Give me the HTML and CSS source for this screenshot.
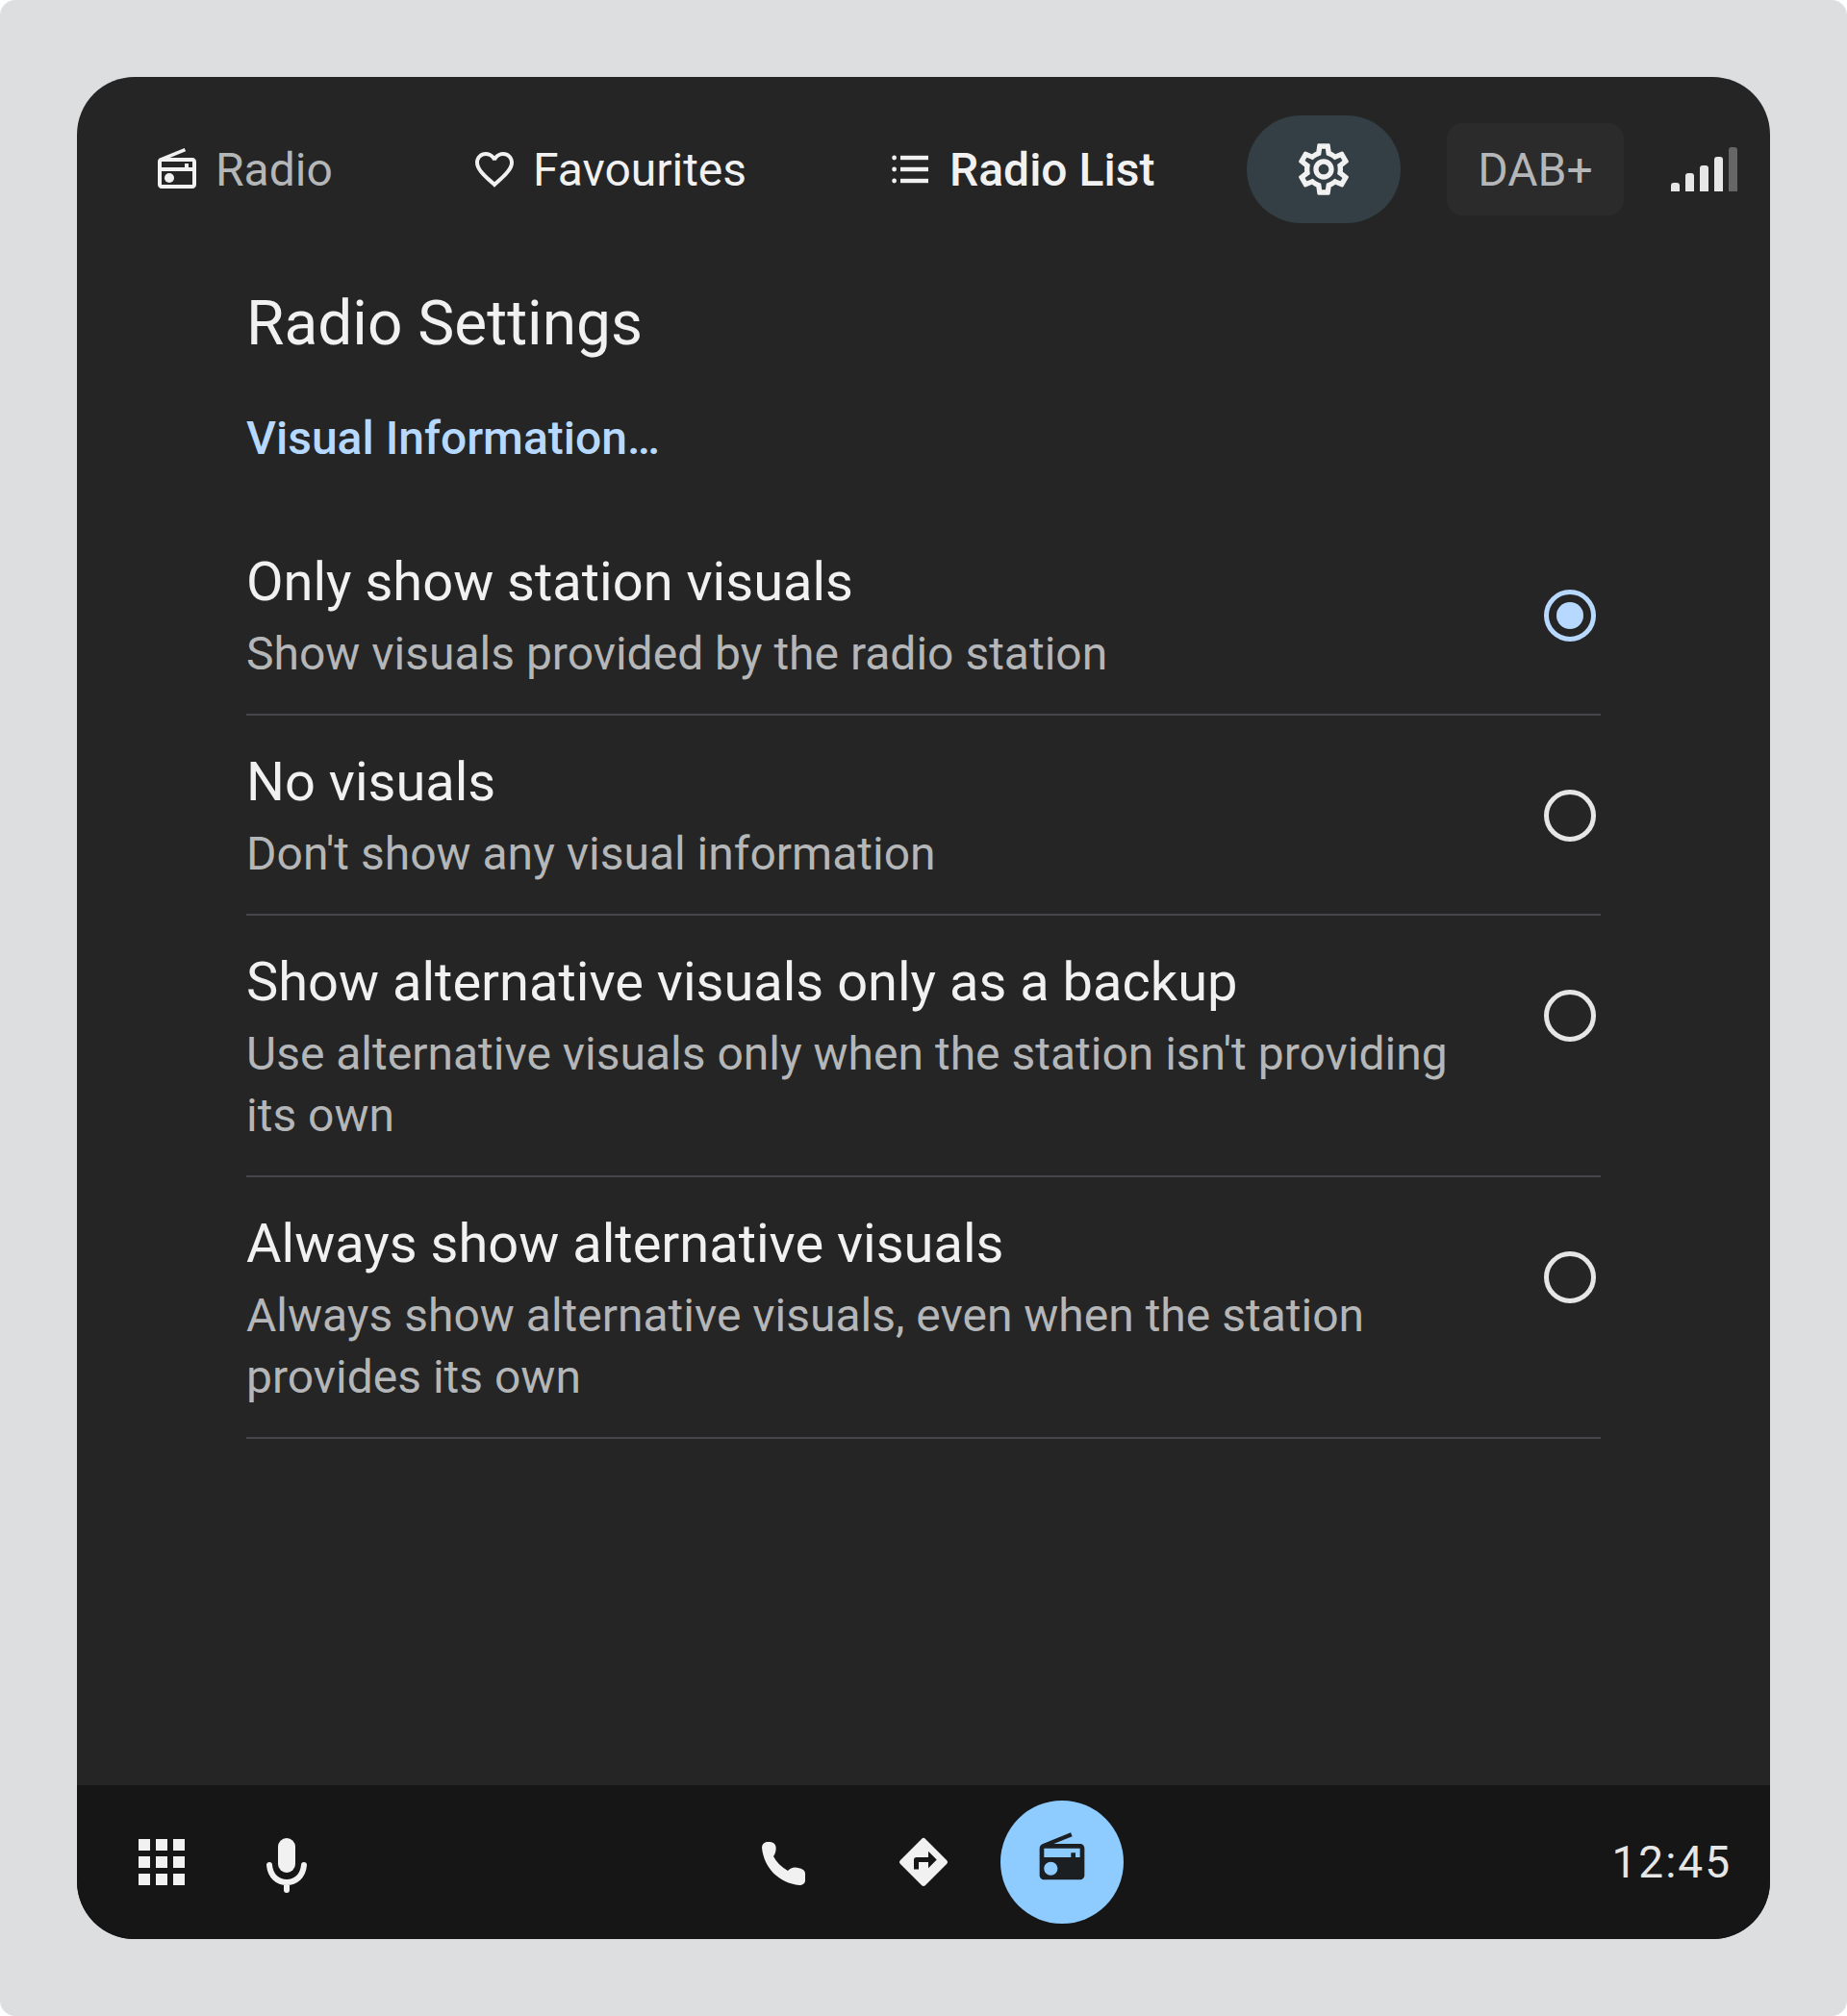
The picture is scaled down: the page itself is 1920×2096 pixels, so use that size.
FILE: index.html
```html
<!DOCTYPE html>
<html lang="en">
<head>
    <meta charset="UTF-8">
    <title>Radio Settings</title>
    <link rel="stylesheet" href="styles.css">
</head>
<body>
    <div class="backdrop">
        <div class="screen">
            <header class="topbar">
                <div class="tab tab-radio">
                    <svg class="icon-48" viewBox="0 0 24 24"><path d="M20 6H8.3l8.26-3.34L15.88 1 3.24 6.15C2.51 6.43 2 7.17 2 8v12c0 1.1.89 2 2 2h16c1.11 0 2-.9 2-2V8c0-1.11-.89-2-2-2zm0 2v3h-2V9h-2v2H4V8h16zM4 20v-7h16v7H4z"/><circle cx="8" cy="16.5" r="2.5"/></svg>
                    <span class="dim">Radio</span>
                </div>
                <div class="tab tab-fav">
                    <svg class="icon-48" viewBox="0 0 24 24"><path d="M16.5 3c-1.74 0-3.41.81-4.5 2.09C10.91 3.81 9.24 3 7.5 3 4.42 3 2 5.42 2 8.5c0 3.78 3.4 6.86 8.55 11.54L12 21.35l1.45-1.32C18.6 15.36 22 12.28 22 8.5 22 5.42 19.58 3 16.5 3zm-4.4 15.55l-.1.1-.1-.1C7.14 14.24 4 11.39 4 8.5 4 6.5 5.5 5 7.5 5c1.54 0 3.04.99 3.57 2.36h1.87C13.46 5.99 14.96 5 16.5 5c2 0 3.5 1.5 3.5 3.5 0 2.89-3.14 5.74-7.9 10.05z"/></svg>
                    <span>Favourites</span>
                </div>
                <div class="tab tab-list">
                    <svg class="icon-48" viewBox="0 0 24 24"><circle cx="3.3" cy="6" r="1.2"/><circle cx="3.3" cy="12" r="1.2"/><circle cx="3.3" cy="18" r="1.2"/><rect x="6.5" y="4.9" width="14.5" height="2.2"/><rect x="6.5" y="10.9" width="14.5" height="2.2"/><rect x="6.5" y="16.9" width="14.5" height="2.2"/></svg>
                    <span class="strong">Radio List</span>
                </div>
                <div class="gear-pill">
                    <svg class="icon-64" viewBox="0 0 24 24"><path d="M19.43 12.98c.04-.32.07-.64.07-.98 0-.34-.03-.66-.07-.98l2.11-1.65c.19-.15.24-.42.12-.64l-2-3.46c-.09-.16-.26-.25-.44-.25-.06 0-.12.01-.17.03l-2.49 1c-.52-.4-1.08-.73-1.69-.98l-.38-2.65C14.46 2.18 14.25 2 14 2h-4c-.25 0-.46.18-.49.42l-.38 2.65c-.61.25-1.17.59-1.69.98l-2.49-1c-.06-.02-.12-.03-.18-.03-.17 0-.34.09-.43.25l-2 3.46c-.13.22-.07.49.12.64l2.11 1.65c-.04.32-.07.65-.07.98 0 .33.03.66.07.98l-2.11 1.65c-.19.15-.24.42-.12.64l2 3.46c.09.16.26.25.44.25.06 0 .12-.01.17-.03l2.49-1c.52.4 1.08.73 1.69.98l.38 2.65c.03.24.24.42.49.42h4c.25 0 .46-.18.49-.42l.38-2.65c.61-.25 1.17-.59 1.69-.98l2.49 1c.06.02.12.03.18.03.17 0 .34-.09.43-.25l2-3.46c.12-.22.07-.49-.12-.64l-2.11-1.65zm-1.98-1.71c.04.31.05.52.05.73 0 .21-.02.43-.05.73l-.14 1.13.89.7 1.08.84-.7 1.21-1.27-.51-1.04-.42-.9.68c-.43.32-.84.56-1.25.73l-1.06.43-.16 1.13-.2 1.35h-1.4l-.19-1.35-.16-1.13-1.06-.43c-.43-.18-.83-.41-1.23-.71l-.91-.7-1.06.43-1.27.51-.7-1.21 1.08-.84.89-.7-.14-1.13c-.03-.31-.05-.54-.05-.74s.02-.43.05-.73l.14-1.13-.89-.7-1.08-.84.7-1.21 1.27.51 1.04.42.9-.68c.43-.32.84-.56 1.25-.73l1.06-.43.16-1.13.2-1.35h1.39l.19 1.35.16 1.13 1.06.43c.43.18.83.41 1.23.71l.91.7 1.06-.43 1.27-.51.7 1.21-1.07.85-.89.7.14 1.13zM12 8c-2.21 0-4 1.79-4 4s1.79 4 4 4 4-1.79 4-4-1.79-4-4-4zm0 6c-1.1 0-2-.9-2-2s.9-2 2-2 2 .9 2 2-.9 2-2 2z"/></svg>
                </div>
                <div class="dab">DAB+</div>
                <div class="signal">
                    <span class="bar bar-1"></span>
                    <span class="bar bar-2"></span>
                    <span class="bar bar-3"></span>
                    <span class="bar bar-4"></span>
                    <span class="bar bar-5"></span>
                </div>
            </header>

            <main class="content">
                <h1 class="page-title">Radio Settings</h1>
                <h2 class="section-title">Visual Information…</h2>

                <div class="option">
                    <div class="option-text">
                        <div class="option-title">Only show station visuals</div>
                        <div class="option-sub">Show visuals provided by the radio station</div>
                    </div>
                    <span class="radio selected"></span>
                </div>
                <div class="option">
                    <div class="option-text">
                        <div class="option-title">No visuals</div>
                        <div class="option-sub">Don't show any visual information</div>
                    </div>
                    <span class="radio"></span>
                </div>
                <div class="option">
                    <div class="option-text">
                        <div class="option-title">Show alternative visuals only as a backup</div>
                        <div class="option-sub">Use alternative visuals only when the station isn't providing its own</div>
                    </div>
                    <span class="radio"></span>
                </div>
                <div class="option">
                    <div class="option-text">
                        <div class="option-title">Always show alternative visuals</div>
                        <div class="option-sub">Always show alternative visuals, even when the station provides its own</div>
                    </div>
                    <span class="radio"></span>
                </div>
            </main>

            <footer class="navbar">
                <div class="apps-grid">
                    <span></span><span></span><span></span>
                    <span></span><span></span><span></span>
                    <span></span><span></span><span></span>
                </div>
                <svg class="mic" viewBox="0 0 42 57">
                    <rect x="12" y="0" width="18" height="36" rx="9"/>
                    <path class="mic-arc" d="M3 28 C4 40 12 46 21 46 C30 46 38 40 39 28 M21 46 V54"/>
                </svg>
                <svg class="phone" viewBox="0 0 45 45"><path d="M5 0 C10 -0.5 14 1 14.5 5 C15 9 14 12 12 15 C15 21 20 26 27 30 C30 27 33 25.5 38 27 C42 28 45 29.5 45 33 L45 40 C45 43.5 42 45 39 45 C18 43 2 27 0 6 C0 3 2 0.5 5 0 Z"/></svg>
                <svg class="directions" viewBox="0 0 24 24"><path d="M21.71 11.29l-9-9a.996.996 0 00-1.41 0l-9 9a.996.996 0 000 1.41l9 9c.39.39 1.02.39 1.41 0l9-9a.996.996 0 000-1.41zM14 14.5V12h-4v3H8v-4c0-.55.45-1 1-1h5V7.5l3.5 3.5-3.5 3.5z"/></svg>
                <div class="radio-fab">
                    <svg class="icon-56" viewBox="0 0 24 24"><path d="M3.24 6.15C2.51 6.43 2 7.17 2 8v12c0 1.1.89 2 2 2h16c1.11 0 2-.9 2-2V8c0-1.11-.89-2-2-2H8.3l8.26-3.34L15.88 1 3.24 6.15zM7 20c-1.66 0-3-1.34-3-3s1.34-3 3-3 3 1.34 3 3-1.34 3-3 3zm13-8h-2v-2h-2v2H4V8h16v4z"/></svg>
                </div>
                <div class="clock">12:45</div>
            </footer>
        </div>
    </div>
</body>
</html>
```
FILE: styles.css
```css
:root {
    --backdrop: #dddee0;
    --card: #252525;
    --bar: #161616;
    --text: #f1f1f1;
    --text-dim: #b4b6b8;
    --accent: #b8d9ff;
    --divider: #47474b;
}
* {
    box-sizing: border-box;
}
html, body {
    margin: 0;
    padding: 0;
    background-color: white;
}
body {
    font-family: Roboto, sans-serif;
    color: var(--text);
}
svg {
    display: block;
    flex-shrink: 0;
    fill: var(--text);
}
.backdrop {
    height: 2096px;
    padding: 80px;
    background-color: var(--backdrop);
    border-radius: 16px;
}
.screen {
    height: 100%;
    display: flex;
    flex-direction: column;
    background-color: var(--card);
    border-radius: 60px;
    overflow: hidden;
}

/* top bar */
.topbar {
    display: flex;
    align-items: center;
    height: 112px;
    margin-top: 40px;
    padding-left: 80px;
    flex-shrink: 0;
}
.tab {
    display: flex;
    align-items: center;
    gap: 16px;
    font-size: 48px;
}
.tab-radio {
    width: 330px;
}
.tab-fav {
    width: 433px;
}
.tab-list {
    width: 373px;
}
.icon-48 {
    width: 48px;
    height: 48px;
}
.icon-64 {
    width: 64px;
    height: 64px;
}
.icon-56 {
    width: 56px;
    height: 56px;
}
.dim {
    color: var(--text-dim);
}
.strong {
    font-weight: 500;
}
.gear-pill {
    display: flex;
    align-items: center;
    justify-content: center;
    width: 160px;
    height: 112px;
    border-radius: 56px;
    background-color: #333f45;
}
.dab {
    display: flex;
    align-items: center;
    justify-content: center;
    width: 184px;
    height: 96px;
    margin-left: 48px;
    border-radius: 16px;
    background-color: #2b2b2b;
    color: var(--text-dim);
    font-size: 48px;
}
.signal {
    display: flex;
    align-items: flex-end;
    gap: 6px;
    height: 46px;
    margin-left: 49px;
}
.bar {
    width: 9px;
    border-radius: 3px 3px 0 0;
    background-color: #e6e6e6;
}
.bar-1 { height: 9px; }
.bar-2 { height: 19px; }
.bar-3 { height: 27px; }
.bar-4 { height: 36px; }
.bar-5 { height: 46px; background-color: #666; }

/* settings list */
.content {
    flex: 1;
    padding: 0 176px 0 176px;
}
.page-title {
    margin: 0;
    padding-top: 65px;
    font-size: 64px;
    line-height: 80px;
    font-weight: 400;
    color: var(--text);
}
.section-title {
    margin: 0;
    padding-top: 51px;
    padding-bottom: 52px;
    font-size: 48px;
    line-height: 56px;
    font-weight: 500;
    color: var(--accent);
}
.option {
    display: flex;
    justify-content: space-between;
    align-items: flex-start;
    padding: 29px 0 30px;
    border-bottom: 2px solid var(--divider);
}
.option-text {
    width: 1300px;
}
.option-title {
    font-size: 56px;
    line-height: 80px;
}
.option-sub {
    margin-top: 3px;
    font-size: 48px;
    line-height: 64px;
    color: var(--text-dim);
}
.radio {
    position: relative;
    width: 54px;
    height: 54px;
    margin-top: 48px;
    margin-right: 5px;
    border: 5px solid #e6e6e6;
    border-radius: 50%;
    flex-shrink: 0;
}
.radio.selected {
    border-color: var(--accent);
}
.radio.selected::after {
    content: "";
    position: absolute;
    top: 8px;
    left: 8px;
    width: 28px;
    height: 28px;
    border-radius: 50%;
    background-color: var(--accent);
}

/* bottom nav */
.navbar {
    display: flex;
    align-items: center;
    height: 160px;
    padding-left: 64px;
    background-color: var(--bar);
    flex-shrink: 0;
}
.apps-grid {
    display: grid;
    grid-template-columns: repeat(3, 12px);
    grid-auto-rows: 12px;
    gap: 6px;
}
.apps-grid span {
    background-color: var(--text);
}
.mic {
    width: 42px;
    height: 57px;
    margin-left: 85px;
    margin-top: 7px;
}
.mic-arc {
    fill: none;
    stroke: var(--text);
    stroke-width: 6;
    stroke-linecap: round;
}
.phone {
    width: 45px;
    height: 45px;
    margin-left: 473px;
    margin-top: 3px;
}
.directions {
    width: 60px;
    height: 60px;
    margin-left: 93px;
}
.radio-fab {
    display: flex;
    align-items: center;
    justify-content: center;
    width: 128px;
    height: 128px;
    margin-left: 50px;
    border-radius: 50%;
    background-color: #8ecbff;
}
.radio-fab svg {
    fill: #1c1f22;
    margin-top: -10px;
}
.clock {
    margin-left: auto;
    margin-right: 40px;
    font-size: 46px;
    letter-spacing: 2px;
    color: #e6e6e6;
}
```
